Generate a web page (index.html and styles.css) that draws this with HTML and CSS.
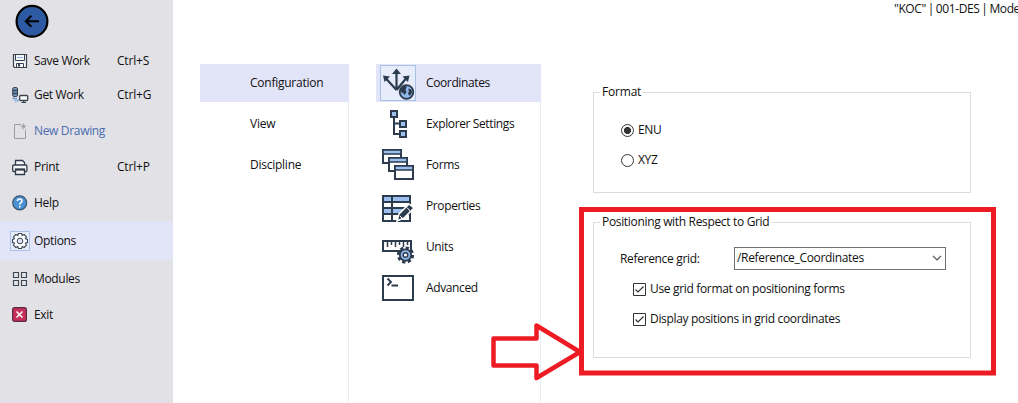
FILE: index.html
```html
<!DOCTYPE html>
<html lang="en">
<head>
<meta charset="utf-8">
<title>Options</title>
<link rel="stylesheet" href="styles.css">
</head>
<body>
<div class="app">
  <nav class="sidebar">
    <div class="back">
      <svg width="34" height="34" viewBox="0 0 34 34"><circle cx="17" cy="17.3" r="15.4" fill="#2d5aa3" stroke="#000" stroke-width="2.2"/><path d="M24 17.3H11M16.3 11.8L10.8 17.3L16.3 22.8" fill="none" stroke="#000" stroke-width="2"/></svg>
    </div>
    <div class="item">
      <span class="ico"><svg width="20" height="20" viewBox="0 0 20 20" fill="none" stroke="#36424f"><path d="M3.5 3.5H16.5V16.5H4.5L3.5 15.5Z" fill="#f5f6f8" stroke-width="1.2"/><path d="M5.5 4V9.5H14.5V4M6.5 16.5V12.5H13.5V16.5"/><path d="M7 6.5H13" stroke="#8fb2df"/><path d="M9 13V15.5" stroke-width="2"/></svg></span>
      <span class="label">Save Work</span><span class="key">Ctrl+S</span>
    </div>
    <div class="item get">
      <span class="ico"><svg width="20" height="20" viewBox="0 0 20 20"><rect x="2.7" y="2.5" width="4.8" height="9" rx="1.5" fill="#7d9fc8" stroke="#36424f"/><path d="M3 5.5H7.5M3 8.5H7.5" stroke="#36424f" stroke-width="1.3"/><path d="M4 12V15H7M5.5 13L8 15.2L5.5 17.5M2.5 13.5H4" fill="none" stroke="#5b94d2" stroke-width="1.2" stroke-dasharray="2 1"/><rect x="9.7" y="10.5" width="8" height="5" rx="1" fill="#fff" stroke="#36424f" stroke-width="1.3"/><path d="M13.7 16V17.5M11.5 17.5H16" stroke="#36424f" stroke-width="1.2"/></svg></span>
      <span class="label">Get Work</span><span class="key">Ctrl+G</span>
    </div>
    <div class="item new disabled">
      <span class="ico"><svg width="20" height="20" viewBox="0 0 20 20" fill="none" stroke="#9b9ba0"><path d="M11 3.5H4.5V17.5H15.5V9"/><path d="M13.5 2.5V8.5M10.8 5.5H16.2M11.5 3.5L15.5 7.5M15.5 3.5L11.5 7.5" stroke-width=".8"/></svg></span>
      <span class="label">New Drawing</span>
    </div>
    <div class="item tall">
      <span class="ico"><svg width="20" height="20" viewBox="0 0 20 20" fill="#f5f6f8" stroke="#303b49" stroke-width="1.3"><path d="M5.5 8V3.5H12.5L14.5 5.5V8"/><rect x="2.7" y="8" width="14.2" height="6.5" rx="1"/><path d="M5.5 12.5H14.5V17.5H5.5Z"/><path d="M5 12.5H15" stroke-width="2"/></svg></span>
      <span class="label">Print</span><span class="key">Ctrl+P</span>
    </div>
    <div class="item tall">
      <span class="ico"><svg width="20" height="20" viewBox="0 0 20 20"><circle cx="9.7" cy="9.8" r="7" fill="#4b92d2" stroke="#36536f" stroke-width="1.2"/><path d="M7.4 8C7.5 5.2 12.1 5.3 12 7.9C11.9 9.6 9.8 9.6 9.8 11.5M9.8 12.8V14.5" fill="none" stroke="#fff" stroke-width="1.6"/></svg></span>
      <span class="label">Help</span>
    </div>
    <div class="item selected">
      <span class="ico boxed"><svg width="20" height="20" viewBox="0 0 20 20" fill="#fafbfe" stroke="#3c4653"><path d="M8.4 2.5H11.6L12.2 4.4L14.1 3.5L16.4 5.8L15.5 7.7L17.5 8.4V11.6L15.5 12.2L16.4 14.2L14.1 16.5L12.2 15.6L11.6 17.5H8.4L7.8 15.6L5.8 16.5L3.5 14.2L4.4 12.2L2.5 11.6V8.4L4.4 7.7L3.5 5.8L5.8 3.5L7.8 4.4Z" stroke-width="1.1"/><circle cx="10" cy="10" r="2.8" fill="#e1e5f7"/></svg></span>
      <span class="label">Options</span>
    </div>
    <div class="item modules">
      <span class="ico"><svg width="20" height="20" viewBox="0 0 20 20" fill="none" stroke="#3c4653" stroke-width="1.1"><path d="M3.5 3.5H8.5V8.5H3.5ZM11.5 3.5H16.5V8.5H11.5ZM3.5 11.5H8.5V16.5H3.5ZM11.5 11.5H16.5V16.5H11.5Z"/></svg></span>
      <span class="label">Modules</span>
    </div>
    <div class="item exit">
      <span class="ico"><svg width="20" height="20" viewBox="0 0 20 20"><rect x="2.6" y="2.6" width="13.8" height="13.8" rx="2" fill="#c52f59" stroke="#5d2c42" stroke-width="1.2"/><path d="M6.5 6.5L12.5 12.5M12.5 6.5L6.5 12.5" stroke="#fff" stroke-width="1.5"/></svg></span>
      <span class="label">Exit</span>
    </div>
  </nav>
  <main class="main">
    <header class="title">"KOC" | 001-DES | Mode</header>
    <div class="content">
      <div class="column groups">
        <div class="row active">Configuration</div>
        <div class="row">View</div>
        <div class="row">Discipline</div>
      </div>
      <div class="column pages">
        <div class="row active"><span class="pic framed"><svg width="36" height="36" viewBox="0 0 36 36"><path d="M16.5 25V8M16.5 25L6 13.5M16.5 25L26 13.5" stroke="#2c3b4d" stroke-width="2.2"/><path d="M16.5 3.5L21 9H12ZM3 10.5L10 11.5L4.500 17ZM29.500 10.500L22.500 11.500L28 17Z" fill="#2c3b4d"/><circle cx="26.500" cy="27" r="6.800" fill="#8fb9ed" stroke="#2c3b4d" stroke-width="1.800"/><path d="M20.500 24L24 21L27 21.500L25.500 24.500L26.500 27L24.500 30L23 28L20.500 27ZM28 23.500L31.500 24.500L32 28L29.500 31L28 28.500L29 26Z" fill="#2c3b4d"/></svg></span>Coordinates</div>
        <div class="row"><span class="pic"><svg width="36" height="36" viewBox="0 0 36 36"><path d="M14 11V28H20M14 17.500H20" fill="none" stroke="#2c3b4d" stroke-width="2"/><path d="M11 5H17V11H11ZM20 15H26V21H20ZM20 25H26V31H20Z" fill="#9bc0ef" stroke="#2c3b4d" stroke-width="2"/></svg></span>Explorer Settings</div>
        <div class="row"><span class="pic"><svg width="36" height="36" viewBox="0 0 36 36" stroke="#2c3b4d" stroke-width="2"><g id="form"><rect x="3" y="3" width="18" height="13" fill="#fff"/><path d="M3 3H21V7H3Z" fill="#9bc0ef" stroke-width="1.600"/></g><use href="#form" x="6" y="8"/><use href="#form" x="12" y="16"/></svg></span>Forms</div>
        <div class="row"><span class="pic"><svg width="36" height="36" viewBox="0 0 36 36"><path d="M3 8H30V33H3Z" fill="#fff"/><path d="M3 8H30V14H3ZM3 20H30V26H3Z" fill="#9bc0ef"/><path d="M3 8H30V33H3ZM3 14H30M3 20H30M3 26H30M12 8V33" fill="none" stroke="#2c3b4d" stroke-width="2"/><path d="M17 33L19 26L29 16L34 20L24 30Z" fill="#2c3b4d" stroke="#fff" stroke-width="1.500"/><path d="M27 19.500L30 23M20 28L22 30" stroke="#fff"/></svg></span>Properties</div>
        <div class="row"><span class="pic"><svg width="36" height="36" viewBox="0 0 36 36"><rect x="3" y="12" width="28" height="10" fill="#fff" stroke="#2c3b4d" stroke-width="2"/><path d="M7.500 13V18M11.500 13V16M15.500 13V18M19.500 13V16M23.500 13V18M27.500 13V16" stroke="#2c3b4d" stroke-width="1.500"/><circle cx="25.500" cy="26" r="7.200" fill="none" stroke="#2c3b4d" stroke-width="2.800" stroke-dasharray="3.250 2.400"/><circle cx="25.500" cy="26" r="5.700" fill="#8fb9ed" stroke="#2c3b4d" stroke-width="1.800"/><circle cx="25.500" cy="26" r="2.300" fill="#fff" stroke="#2c3b4d" stroke-width="1.500"/></svg></span>Units</div>
        <div class="row"><span class="pic"><svg width="36" height="36" viewBox="0 0 36 36" fill="none" stroke="#2c3b4d"><rect x="3" y="6" width="30" height="24" fill="#fff" stroke-width="2"/><path d="M7.500 8.500L11 12L7.500 15.500M11.500 15.500H18" stroke-width="1.900"/></svg></span>Advanced</div>
      </div>
      <div class="settings">
        <section class="group format">
          <h2 class="legend">Format</h2>
          <div class="option"><i class="radio on"></i>ENU</div>
          <div class="option"><i class="radio"></i>XYZ</div>
        </section>
        <section class="group grid">
          <h2 class="legend">Positioning with Respect to Grid</h2>
          <div class="reference"><span class="reflabel">Reference grid:</span>
            <div class="select"><span>/Reference_Coordinates</span><svg width="10" height="6" viewBox="0 0 10 6"><path d="M1 1L5 5L9 1" fill="none" stroke="#555" stroke-width="1.100"/></svg></div></div>
          <div class="check use"><svg width="13" height="13" viewBox="0 0 13 13" fill="none" stroke="#333"><path d="M.5.5H12.500V12.500H.5Z"/><path d="M2.500 6.500L5 9L10.500 3.500" stroke-width="1.200"/></svg><span>Use grid format on positioning forms</span></div>
          <div class="check"><svg width="13" height="13" viewBox="0 0 13 13" fill="none" stroke="#333"><path d="M.5.5H12.500V12.500H.5Z"/><path d="M2.500 6.500L5 9L10.500 3.500" stroke-width="1.200"/></svg><span>Display positions in grid coordinates</span></div>
        </section>
      </div>
    </div>
  </main>
  <svg class="callout" width="1018" height="403" viewBox="0 0 1018 403" fill="none" stroke="#ed1c24"><rect x="581.500" y="209.500" width="412" height="163.500" stroke-width="5"/><path d="M493.500 338.500H536.500V325.500L580 352L536.500 378V365.500H493.500Z" stroke-width="4.500" stroke-linejoin="round"/></svg>
</div>
</body>
</html>
```
FILE: styles.css
```css
* { box-sizing: border-box; }
body { margin: 0; background: #fff; color: #111; font: 12px/16px "Open Sans", "Noto Sans", sans-serif; letter-spacing: -.33px; }
svg { display: block; flex: none; }
.app { position: relative; display: flex; width: 1018px; height: 403px; overflow: hidden; white-space: nowrap; }
.sidebar { width: 173px; flex: none; background: #e2e2e6; }
.back { height: 44px; padding: 4px 0 0 15px; }
.item { display: flex; align-items: center; height: 34px; padding-left: 10px; }
.item.new { height: 37px; }
.item.tall { height: 36px; }
.item.selected { height: 39px; background: #e2e4f8; }
.item.modules { height: 37px; }
.item.exit { height: 36px; }
.ico { width: 20px; height: 20px; flex: none; }
.ico.boxed { outline: 1px solid #a9c1e8; outline-offset: -1px; background: #e7ecfb; }
.label { margin-left: 4px; }
.key { margin-left: auto; width: 56px; letter-spacing: -.2px; }
.disabled { color: #4b6caf; }
.main { display: flex; flex-direction: column; flex: 1; min-width: 0; }
.title { height: 64px; padding-top: 1px; padding-left: 721px; letter-spacing: -.4px; word-spacing: -.8px; }
.content { display: flex; flex: 1; padding-left: 27px; }
.column { border-right: 1px solid #ebebef; }
.row { display: flex; align-items: center; height: 38px; margin-bottom: 3px; }
.row.active { background: #e2e4f8; margin-right: -1px; }
.groups { width: 149px; margin-right: 27px; letter-spacing: -.25px; }
.groups .row { padding-left: 50px; }
.pages { width: 165px; letter-spacing: -.38px; }
.pages .row { padding-left: 4px; }
.pic { width: 36px; height: 36px; flex: none; margin-right: 10px; }
.framed { outline: 1px solid #a9c1e8; outline-offset: -1px; background: #e7ecfb; }
.settings { width: 378px; margin-left: 52px; padding-top: 28px; }
.group { border: 1px solid #dcdcdc; }
.format { height: 101px; margin-bottom: 29px; padding-left: 27px; }
.grid { height: 136px; padding-left: 26px; }
.legend { width: max-content; margin: -9px 0 0 -20px; padding: 0 2px; background: #fff; font-size: 12px; font-weight: 400; line-height: 16px; }
.grid .legend { margin-left: -20px; }
.format .legend { margin-left: -21px; margin-bottom: 15px; letter-spacing: -.2px; }
.option { display: flex; align-items: center; height: 30px; gap: 4px; }
.radio { width: 13px; height: 13px; border: 1px solid #333; border-radius: 50%; }
.radio.on { background: radial-gradient(circle, #333 0 3.2px, #fff 3.9px); }
.reference { display: flex; align-items: center; height: 23px; margin-top: 17px; }
.reflabel { width: 114px; }
.select { display: flex; align-items: center; justify-content: space-between; width: 212px; height: 23px; padding: 0 3px 1px 2px; border: 1px solid #707070; }
.check { display: flex; align-items: center; height: 30px; padding-left: 13px; gap: 4px; }
.use { margin-top: 4px; }
.callout { position: absolute; top: 0; left: 0; pointer-events: none; }
```
